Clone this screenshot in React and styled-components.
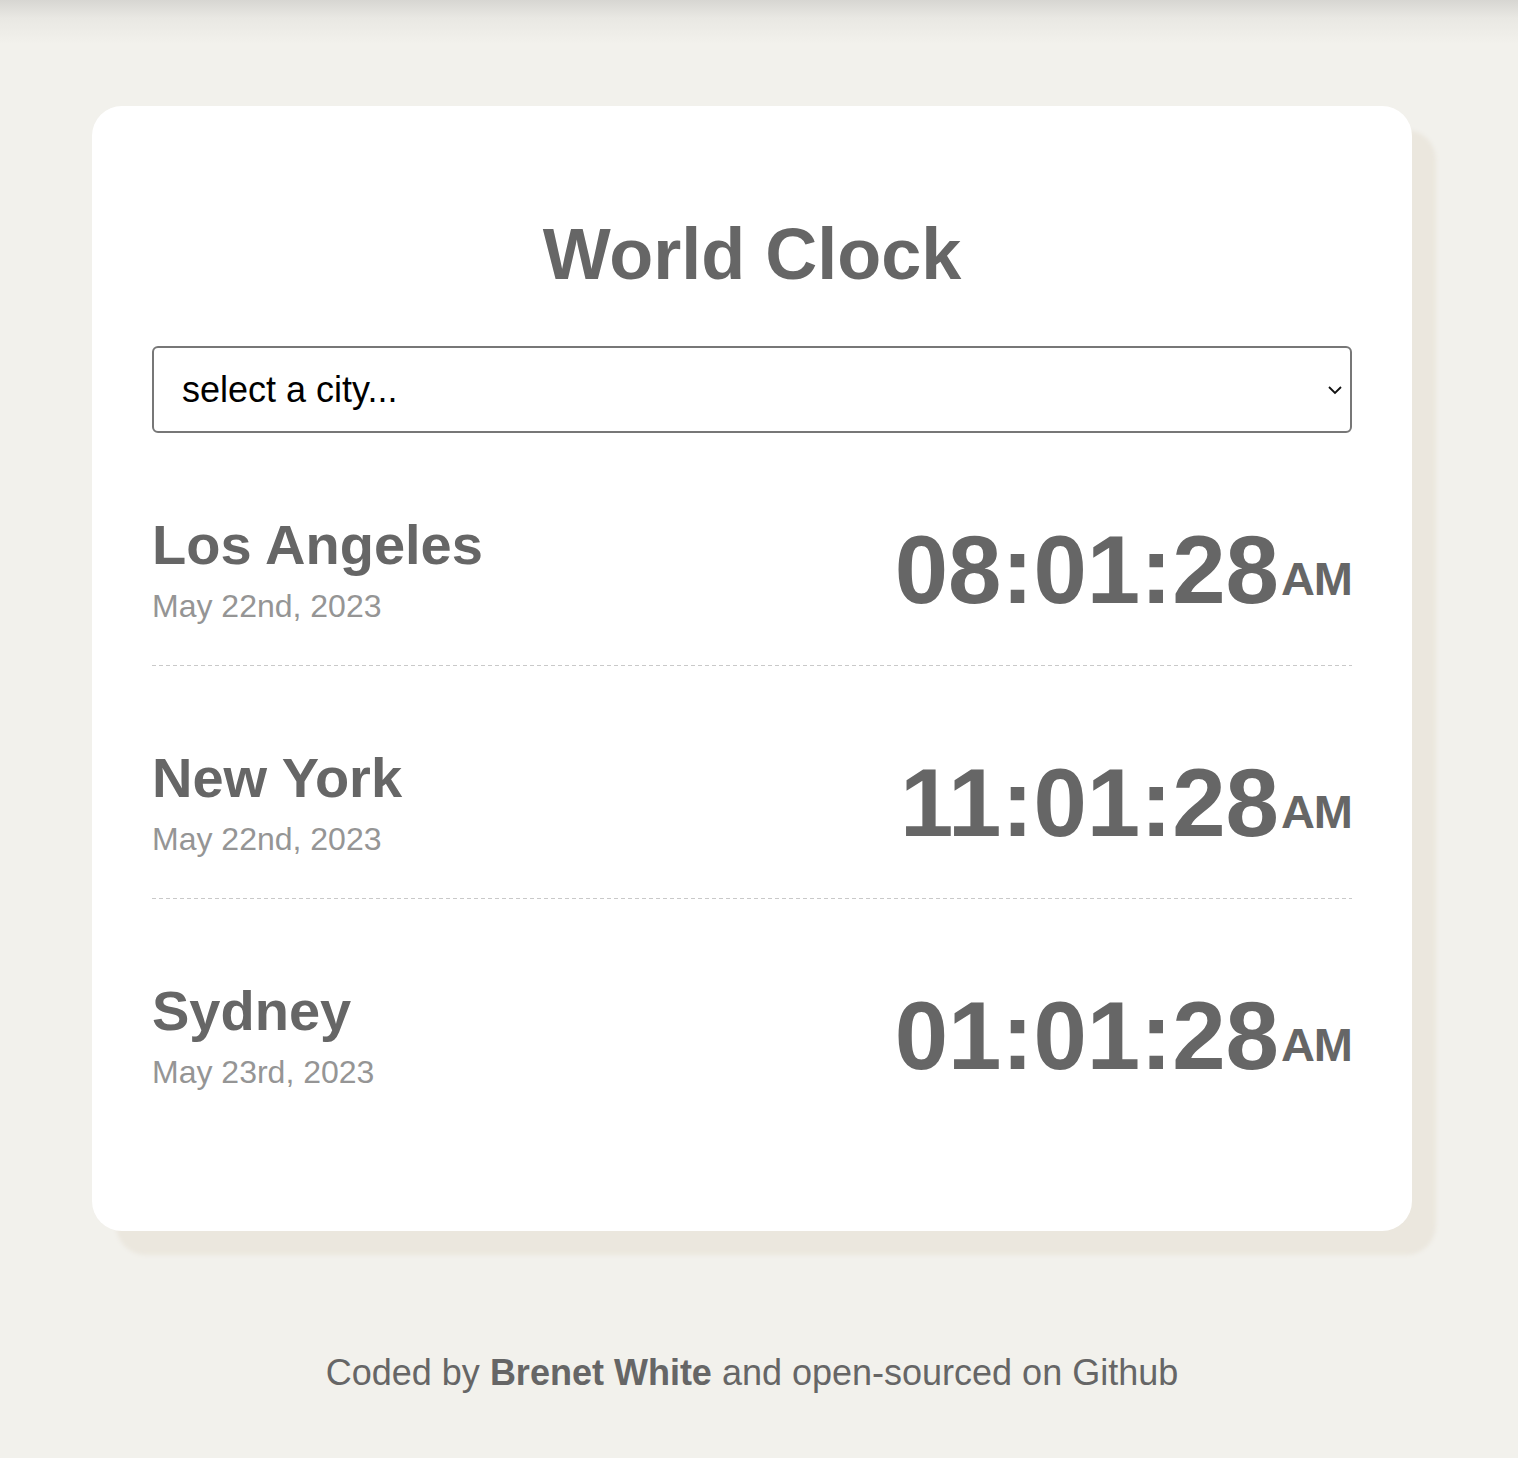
import React from "react";
import styled, { createGlobalStyle } from "styled-components";

const Global = createGlobalStyle`
  html, body { margin: 0; padding: 0; }
  body {
    background: linear-gradient(#d7d6d2 0px, #e9e8e3 18px, #f2f1ec 44px) top / 100% 60px no-repeat, #f2f1ec;
    font-family: "Liberation Sans", Arial, Helvetica, sans-serif;
    min-height: 1458px;
  }
`;

const Page = styled.div`
  box-sizing: border-box;
  width: 1504px;
  padding-top: 106px;
  display: flex;
  flex-direction: column;
  align-items: center;
`;

const Card = styled.main`
  box-sizing: border-box;
  width: 1320px;
  background: #fff;
  border-radius: 30px;
  box-shadow: 24px 24px 4px #ebe7de;
  padding: 60px 60px 99px;
  display: flex;
  flex-direction: column;
`;

const Title = styled.h1`
  margin: 52px 0 0;
  font-size: 72px;
  line-height: 1;
  font-weight: 700;
  color: #666;
  text-align: center;
`;

const SelectWrap = styled.div`
  position: relative;
  margin-top: 56px;
`;

const Select = styled.select`
  appearance: none;
  -webkit-appearance: none;
  box-sizing: border-box;
  width: 100%;
  height: 87px;
  border: 2px solid #777;
  border-radius: 6px;
  background: #fff;
  padding: 0 40px 0 28px;
  font-family: "Liberation Sans", Arial, sans-serif;
  font-size: 36px;
  color: #000;
  outline: none;
`;

const Chevron = styled.svg`
  position: absolute;
  right: 9px;
  top: 50%;
  transform: translateY(-50%);
  pointer-events: none;
`;

const Row = styled.section`
  display: flex;
  justify-content: space-between;
  align-items: center;
  padding: 84px 0 44px;
  background-image: ${(p) =>
    p.$last
      ? "none"
      : "repeating-linear-gradient(to right, #c9c9c9 0 4px, transparent 4px 7px)"};
  background-size: 100% 1px;
  background-position: left bottom;
  background-repeat: no-repeat;
`;

const CityInfo = styled.div`
  display: flex;
  flex-direction: column;
  gap: 17px;
`;

const CityName = styled.h2`
  margin: 0;
  font-size: 56px;
  line-height: 1;
  font-weight: 700;
  color: #666;
`;

const CityDate = styled.div`
  font-size: 32px;
  line-height: 1;
  color: #959595;
`;

const Time = styled.div`
  font-size: 96px;
  line-height: 1;
  font-weight: 700;
  color: #666;
  white-space: nowrap;
`;

const Meridiem = styled.span`
  font-size: 47px;
  letter-spacing: -1px;
  margin-left: 2px;
  vertical-align: 8px;
`;

const Footer = styled.footer`
  margin-top: 124px;
  font-size: 36px;
  line-height: 1;
  color: #666;
  text-align: center;
`;

const Strong = styled.strong`
  font-weight: 700;
`;

const cities = [
  { name: "Los Angeles", date: "May 22nd, 2023", time: "08:01:28" },
  { name: "New York", date: "May 22nd, 2023", time: "11:01:28" },
  { name: "Sydney", date: "May 23rd, 2023", time: "01:01:28" },
];

export default function App() {
  return (
    <>
      <Global />
      <Page>
        <Card>
          <Title>World Clock</Title>
          <SelectWrap>
            <Select defaultValue="">
              <option value="">select a city...</option>
              <option value="tokyo">Tokyo</option>
              <option value="paris">Paris</option>
            </Select>
            <Chevron width="16" height="10" viewBox="0 0 16 10">
              <path d="M2 2 L8 8 L14 2" fill="none" stroke="#111" strokeWidth="1.8" />
            </Chevron>
          </SelectWrap>
          {cities.map((c, i) => (
            <Row key={c.name} $last={i === cities.length - 1}>
              <CityInfo>
                <CityName>{c.name}</CityName>
                <CityDate>{c.date}</CityDate>
              </CityInfo>
              <Time>
                {c.time}
                <Meridiem>AM</Meridiem>
              </Time>
            </Row>
          ))}
        </Card>
        <Footer>
          Coded by <Strong>Brenet White</Strong> and open-sourced on Github
        </Footer>
      </Page>
    </>
  );
}
